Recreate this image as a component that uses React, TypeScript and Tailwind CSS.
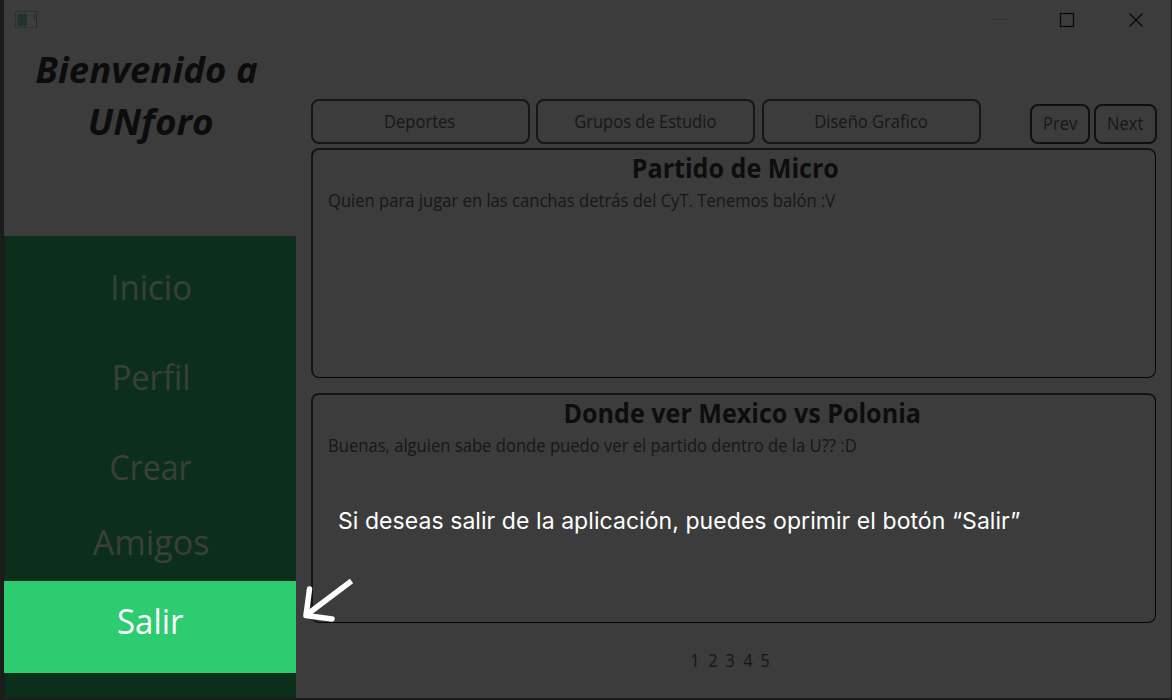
import type { ReactNode } from "react";

function Fit({ children, className = "" }: { children: ReactNode; className?: string }) {
  return <span className={`inline-block whitespace-nowrap ${className}`}>{children}</span>;
}

function TitleBar() {
  return (
    <header className="flex h-10 shrink-0 items-start justify-between">
      <svg width="24" height="18" viewBox="0 0 24 18" className="mt-[11px] ml-[10px]">
        <rect x="1.500" y="0.500" width="21" height="16" fill="#3c3f3e" stroke="#2b3431" />
        <rect x="3.500" y="3" width="9.500" height="12" fill="#20332c" />
        <path d="M20.500 3v6" stroke="#25302c" />
        <path d="M22.500 0v17" stroke="#252c29" />
      </svg>
      <svg width="180" height="40" viewBox="0 0 180 40" fill="none">
        <path d="M1 19.500h15" stroke="#303030" />
        <rect x="69.500" y="13.500" width="13" height="13" stroke="#080808" strokeWidth="1.200" />
        <path d="M138.500 13.500l13 13M151.500 13.500l-13 13" stroke="#080808" strokeWidth="1.300" />
      </svg>
    </header>
  );
}

function Sidebar() {
  return (
    <aside className="flex w-[292px] shrink-0 flex-col">
      <h1 className="flex h-[196px] flex-col items-center pt-[4px] text-[35px] leading-[52px] font-bold text-[#0c0c0c] italic">
        <Fit className="-ml-[8px] scale-x-[1.045]">Bienvenido a</Fit>
        <Fit className="ml-[2px] scale-x-[1.055]">UNforo</Fit>
      </h1>
      <nav className="flex h-[462px] flex-col border-l border-[#141d18] bg-[#0c2f1c] text-center text-[34px] leading-[44px] text-[#3b3f3c]">
        <a className="mt-[29px] h-[90px]"><Fit className="ml-[1px] scale-x-[0.970]">Inicio</Fit></a>
        <a className="h-[90px]"><Fit className="ml-[1px] scale-x-[0.960]">Perfil</Fit></a>
        <a className="h-[75px]"><Fit className="ml-[1px] scale-x-[0.940]">Crear</Fit></a>
        <a className="h-[61px]"><Fit className="ml-[1px]">Amigos</Fit></a>
        <a className="-ml-px h-[92px] bg-[#2ecc71] pt-[18px] text-white"><Fit className="scale-x-[0.970]">Salir</Fit></a>
      </nav>
    </aside>
  );
}

function Tab({ children }: { children: ReactNode }) {
  return (
    <button className="h-[45px] w-[219px] rounded-[8px] border-2 border-[#161616] pr-px pb-[2px]">
      <Fit className="scale-x-[0.945]">{children}</Fit>
    </button>
  );
}

function Post({ title, children, className = "" }: { title: string; children: ReactNode; className?: string }) {
  return (
    <article className="h-[230px] w-[845px] rounded-[8px] border-t-2 border-r border-b border-l-2 border-t-[#141414] border-r-[#060606] border-b-[#060606] border-l-[#141414] px-[15px] pt-px">
      <h2 className={`text-center text-[26px] leading-[35px] font-bold text-[#0d0d0d] ${className}`}>
        <Fit className="scale-x-[0.965]">{title}</Fit>
      </h2>
      <p className="text-[17.5px] leading-[28px]"><Fit className="origin-left scale-x-[0.949]">{children}</Fit></p>
    </article>
  );
}

export default function App() {
  return (
    <div className="relative flex h-[700px] w-[1172px] overflow-hidden border-r border-b-2 border-l-4 border-[#1c1c1c] bg-[#3c3c3c] font-['Open_Sans','Noto_Sans',sans-serif] text-[#171717]">
      <div className="flex w-full flex-col">
        <TitleBar />
        <div className="flex">
          <Sidebar />
          <main className="ml-[15px] w-[846px]">
            <div className="mt-[59px] flex items-end text-[17.5px] leading-[28px]">
              <div className="flex gap-[6.400px]">
                <Tab>Deportes</Tab>
                <Tab>Grupos de Estudio</Tab>
                <Tab>Diseño Grafico</Tab>
              </div>
              <button className="ml-auto h-10 w-[60px] rounded-[8px] border-2 border-[#101010] pb-[2px]"><Fit className="scale-x-[0.945]">Prev</Fit></button>
              <button className="ml-1 h-10 w-[63px] rounded-[8px] border-2 border-[#101010] pb-[2px]"><Fit className="scale-x-[0.945]">Next</Fit></button>
            </div>
            <div className="mt-1 flex flex-col gap-[15px]">
              <Post title="Partido de Micro" className="pl-[2px]">Quien para jugar en las canchas detrás del CyT. Tenemos balón :V</Post>
              <Post title="Donde ver Mexico vs Polonia" className="pl-[16px]">Buenas, alguien sabe donde puedo ver el partido dentro de la U?? :D</Post>
            </div>
            <div className="mt-[23px] ml-[379px] flex gap-[7.500px] text-[17.5px] leading-[28px]">
              {[1, 2, 3, 4, 5].map((n) => <Fit key={n} className="scale-x-[0.945]">{n}</Fit>)}
            </div>
          </main>
        </div>
      </div>
      <p className="absolute top-[507px] left-[334px] font-['Inter',sans-serif] text-[23px] leading-[28px] tracking-[0.060px] whitespace-nowrap text-white">
        Si deseas salir de la aplicación, puedes oprimir el botón “Salir”
      </p>
      <svg className="absolute top-[574px] left-[294px]" width="60" height="52" viewBox="298 574 60 52" fill="none" stroke="white" strokeWidth="5.500">
        <path d="M351.500 581L305 616" />
        <path d="M309.500 589L306 615.500L332 619" strokeLinecap="round" strokeLinejoin="round" />
      </svg>
    </div>
  );
}
